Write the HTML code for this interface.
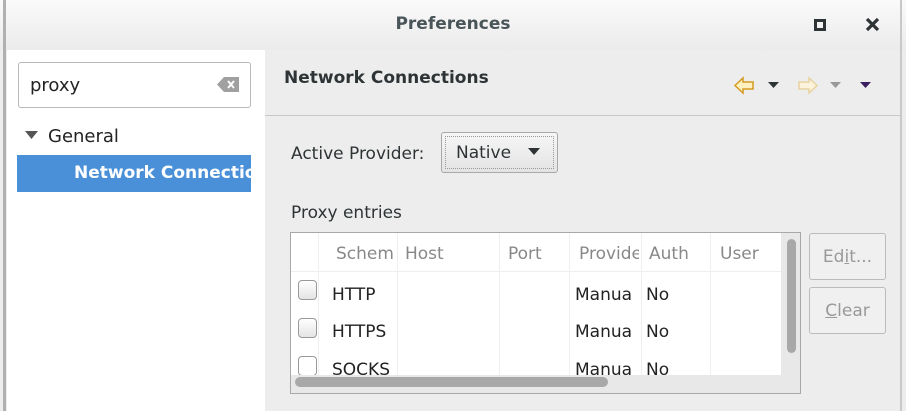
<!DOCTYPE html>
<html><head><style>
*{margin:0;padding:0;box-sizing:border-box}
body{width:906px;height:411px;overflow:hidden;background:#ededed;font-family:"DejaVu Sans","Liberation Sans",sans-serif;position:relative;color:#2e3436}
.a{position:absolute}
</style></head><body>
<div class="a" style="left:0;top:0;width:906px;height:50px;background:linear-gradient(#fafafa,#ebebeb);"></div>
<div class="a" style="left:3px;top:0;width:3px;height:411px;background:#b0b0b0"></div>
<div class="a" style="left:900px;top:0;width:2px;height:411px;background:#c8c8c8"></div>
<div class="a" style="left:0;top:14px;width:906px;text-align:center;font-size:17px;font-weight:bold;color:#4a5559">Preferences</div>
<div class="a" style="left:814px;top:19px;width:12px;height:12px;border:3px solid #2e3436"></div>
<svg class="a" style="left:865px;top:17px" width="15" height="15"><path d="M2 2 L13 13 M13 2 L2 13" stroke="#2e3436" stroke-width="3.2"/></svg>
<div class="a" style="left:7px;top:50px;width:258px;height:361px;background:#fff"></div>
<div class="a" style="left:18px;top:62px;width:233px;height:46px;border:1px solid #b8b8b8;border-radius:3px;background:#fff"></div>
<div class="a" style="left:30px;top:75px;font-size:18px;color:#222">proxy</div>
<svg class="a" style="left:216px;top:76px" width="24" height="17"><path d="M1 8.5 L8 1 H23 V16 H8 Z" fill="#a0a0a0"/><path d="M12 5 L18 12 M18 5 L12 12" stroke="#fff" stroke-width="2"/></svg>
<svg class="a" style="left:25px;top:131px" width="14" height="9"><path d="M0 0 H13 L6.5 8 Z" fill="#555"/></svg>
<div class="a" style="left:48px;top:126px;font-size:18px;color:#222">General</div>
<div class="a" style="left:17px;top:155px;width:234px;height:37px;background:#4a90d9;overflow:hidden"><div style="position:absolute;left:57px;top:8px;font-size:17px;font-weight:bold;color:#fff;white-space:nowrap">Network Connections</div></div>
<div class="a" style="left:284px;top:68px;font-size:17px;font-weight:bold;color:#2e3436">Network Connections</div>
<div class="a" style="left:265px;top:115px;width:635px;height:1px;background:#c8c8c8"></div>
<svg class="a" style="left:733px;top:76px" width="145" height="20">
<path d="M2 9.5 L10 2 V6 H20 V13 H10 V17 Z" fill="#fff2c0" stroke="#d49a20" stroke-width="1.5"/>
<path d="M35 6 H46 L40.5 12 Z" fill="#2e3436"/>
<path d="M84 9.5 L76 2 V6 H66 V13 H76 V17 Z" fill="#fbf3dc" stroke="#e8d3a0" stroke-width="1.5"/>
<path d="M97 6 H108 L102.5 12 Z" fill="#999"/>
<path d="M127 6 H138 L132.5 12 Z" fill="#3a2060"/>
</svg>
<div class="a" style="left:291px;top:144px;font-size:17px">Active Provider:</div>
<div class="a" style="left:441px;top:132px;width:117px;height:41px;border:1px solid #a8a8a8;border-radius:3px;background:linear-gradient(#f6f6f6,#e4e4e4)"><div style="position:absolute;left:3px;top:3px;right:3px;bottom:3px;border:1px dotted #999"></div><div style="position:absolute;left:14px;top:10px;font-size:17px">Native</div><svg style="position:absolute;left:86px;top:15px" width="13" height="8"><path d="M0 0H12L6 7Z" fill="#2e3436"/></svg></div>
<div class="a" style="left:291px;top:203px;font-size:17px">Proxy entries</div>
<div class="a" style="left:290px;top:232px;width:511px;height:162px;border:1px solid #a8a8a8;background:#fff;overflow:hidden;font-size:17px">
<div class="a" style="left:0;top:0;width:490px;height:39px;border-bottom:1px solid #eee;color:#888"></div>
<div class="a" style="left:27px;top:0;width:1px;height:155px;background:#eee"></div>
<div class="a" style="left:106px;top:0;width:1px;height:155px;background:#eee"></div>
<div class="a" style="left:208px;top:0;width:1px;height:155px;background:#eee"></div>
<div class="a" style="left:278px;top:0;width:1px;height:155px;background:#eee"></div>
<div class="a" style="left:350px;top:0;width:1px;height:155px;background:#eee"></div>
<div class="a" style="left:419px;top:0;width:1px;height:155px;background:#eee"></div>
<div class="a" style="left:490px;top:0;width:1px;height:155px;background:#eee"></div>
<div class="a" style="left:45px;top:11px;color:#888">Schem</div>
<div class="a" style="left:114px;top:11px;color:#888">Host</div>
<div class="a" style="left:217px;top:11px;color:#888">Port</div>
<div class="a" style="left:288px;top:11px;color:#888;width:60px;overflow:hidden;white-space:nowrap">Provider</div>
<div class="a" style="left:358px;top:11px;color:#888">Auth</div>
<div class="a" style="left:429px;top:11px;color:#888">User</div>
<div class="a" style="left:7px;top:47px;width:19px;height:20px;border:1px solid #999;border-radius:4px;background:linear-gradient(#fff,#e4e4e4)"></div>
<div class="a" style="left:41px;top:52px;color:#222">HTTP</div>
<div class="a" style="left:284px;top:52px;color:#222;width:64px;overflow:hidden">Manua</div>
<div class="a" style="left:355px;top:52px;color:#222">No</div>
<div class="a" style="left:7px;top:85px;width:19px;height:20px;border:1px solid #999;border-radius:4px;background:linear-gradient(#fff,#e4e4e4)"></div>
<div class="a" style="left:41px;top:89px;color:#222;width:64px;overflow:hidden;white-space:nowrap">HTTPS</div>
<div class="a" style="left:284px;top:89px;color:#222">Manua</div>
<div class="a" style="left:355px;top:89px;color:#222">No</div>
<div class="a" style="left:0;top:0;width:490px;height:142px;overflow:hidden">
<div class="a" style="left:7px;top:123px;width:19px;height:20px;border:1px solid #999;border-radius:4px;background:#fff"></div>
<div class="a" style="left:41px;top:127px;color:#222">SOCKS</div>
<div class="a" style="left:284px;top:127px;color:#222">Manua</div>
<div class="a" style="left:355px;top:127px;color:#222">No</div>
</div>
<div class="a" style="left:0;top:142px;width:490px;height:18px;background:#e8e8e8"></div>
<div class="a" style="left:4px;top:144px;width:313px;height:10px;border-radius:5px;background:#a8a8a8"></div>
<div class="a" style="left:490px;top:0;width:19px;height:160px;background:#e8e8e8"></div>
<div class="a" style="left:496px;top:6px;width:9px;height:114px;border-radius:5px;background:#a8a8a8"></div>
</div>
<div class="a" style="left:809px;top:233px;width:77px;height:47px;border:1px solid #bbb;border-radius:3px;background:#f0f0f0;color:#999;font-size:17px;text-align:center;line-height:47px">Ed<u>i</u>t...</div>
<div class="a" style="left:809px;top:287px;width:77px;height:47px;border:1px solid #bbb;border-radius:3px;background:#f0f0f0;color:#999;font-size:17px;text-align:center;line-height:47px"><u>C</u>lear</div>
</body></html>
